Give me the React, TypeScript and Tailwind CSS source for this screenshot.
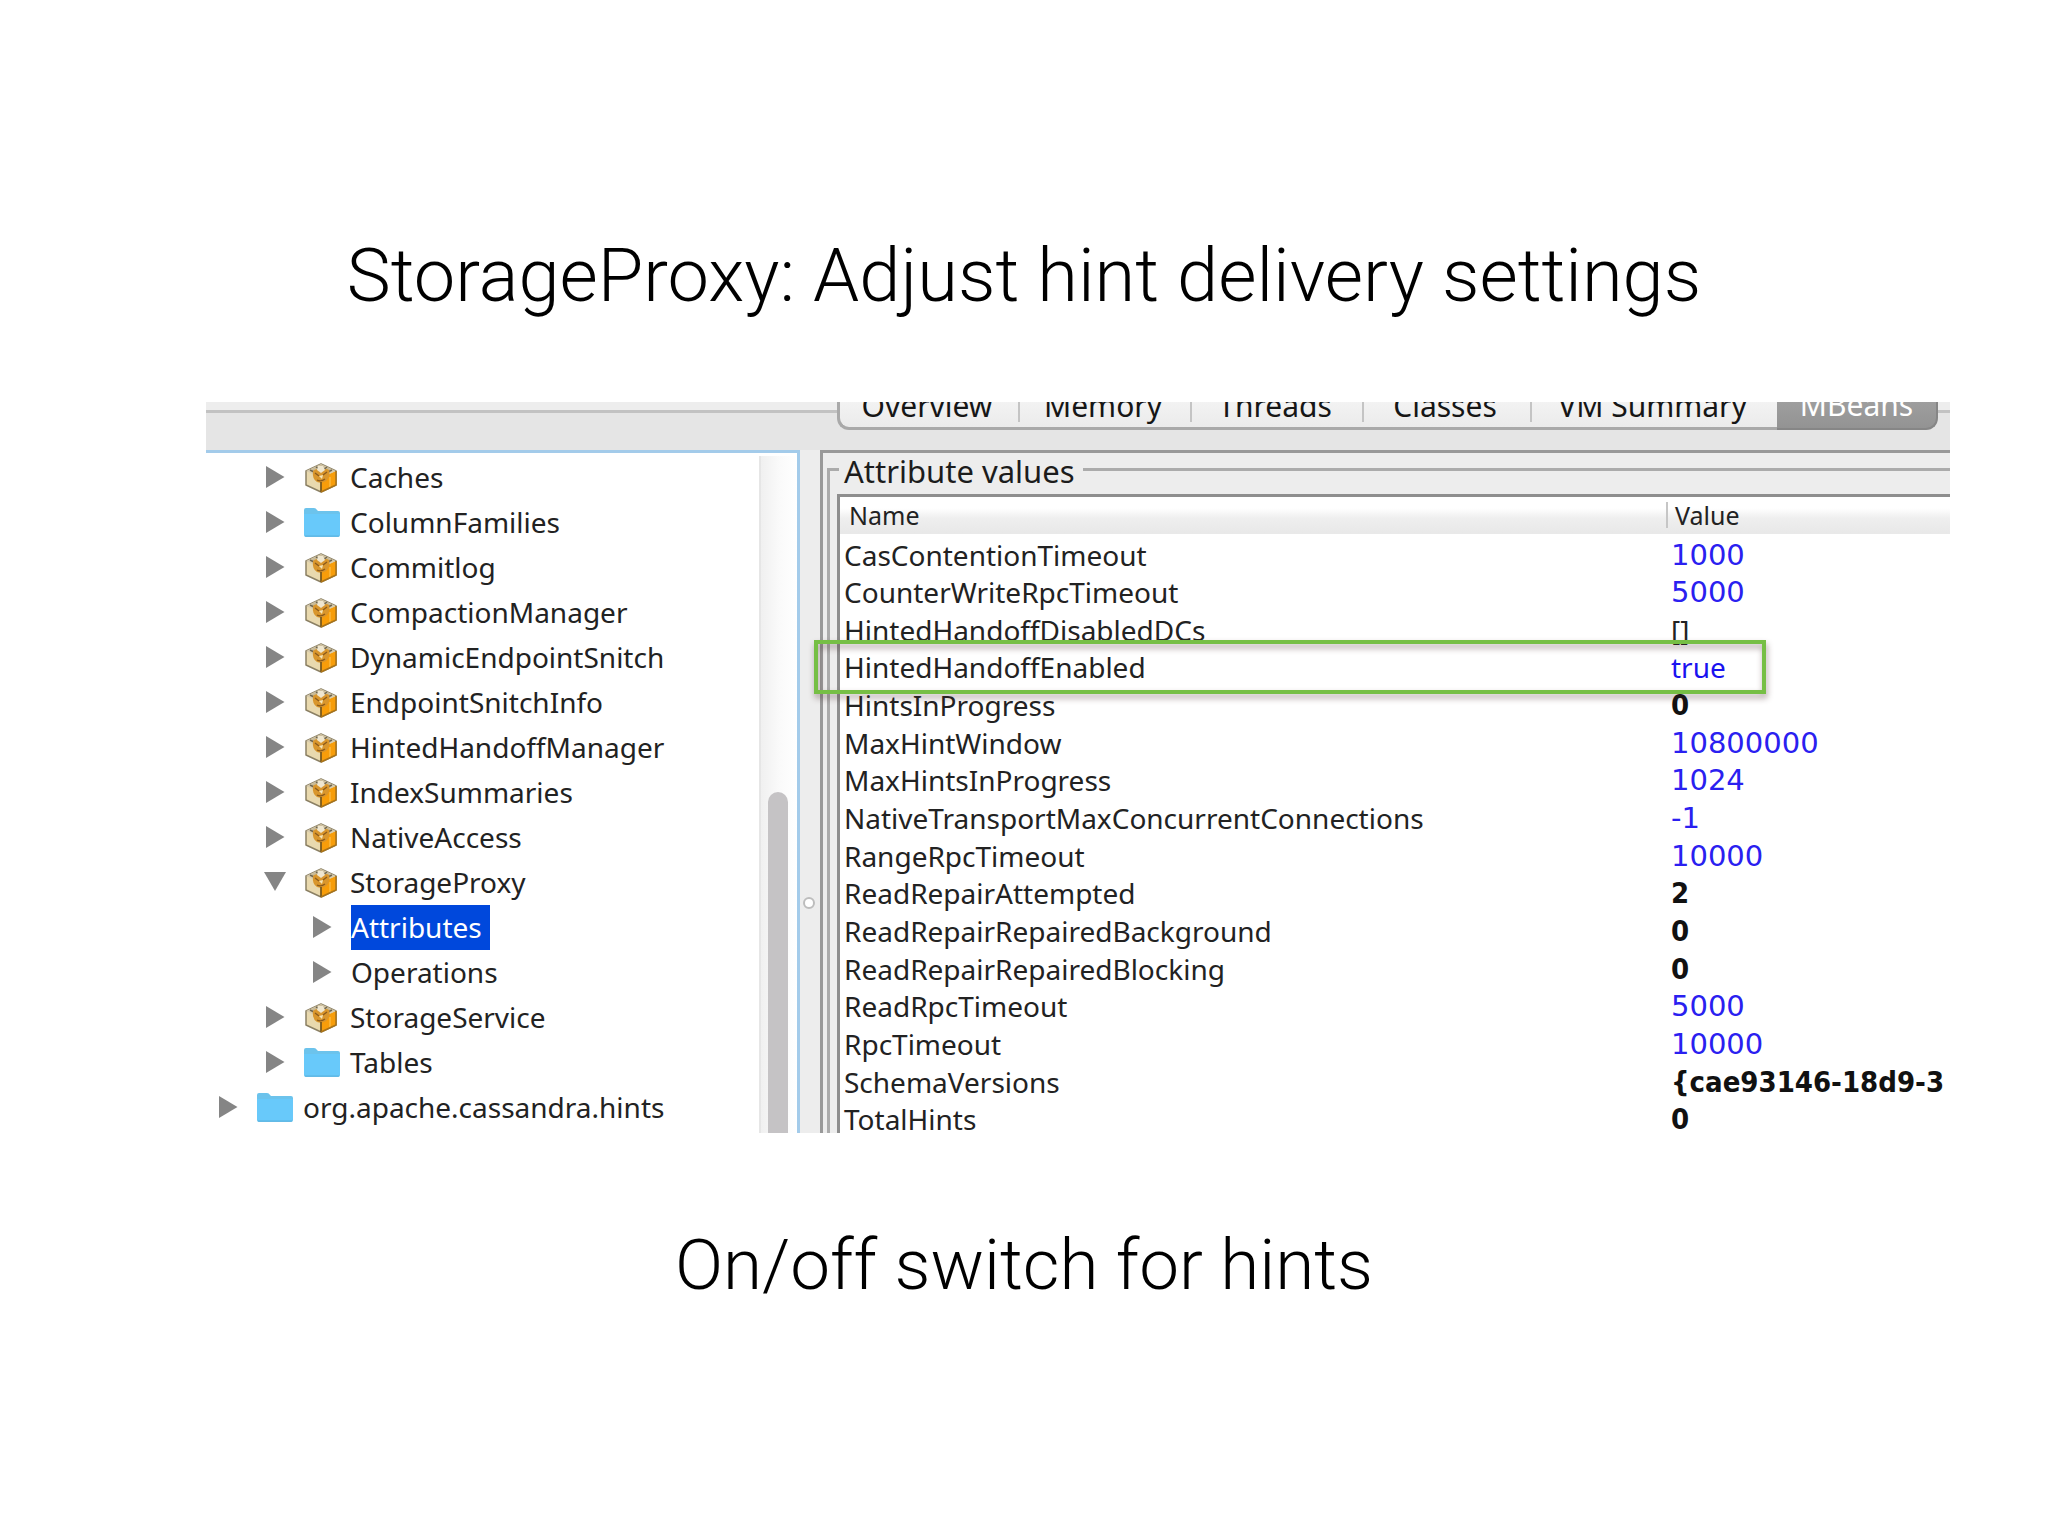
type NodeIcon = "bean" | "folder" | "none";

type TreeNode = {
  label: string;
  icon: NodeIcon;
  level: 0 | 1 | 2;
  open?: boolean;
  selected?: boolean;
};

const nodes: TreeNode[] = [
  { label: "Caches", icon: "bean", level: 1 },
  { label: "ColumnFamilies", icon: "folder", level: 1 },
  { label: "Commitlog", icon: "bean", level: 1 },
  { label: "CompactionManager", icon: "bean", level: 1 },
  { label: "DynamicEndpointSnitch", icon: "bean", level: 1 },
  { label: "EndpointSnitchInfo", icon: "bean", level: 1 },
  { label: "HintedHandoffManager", icon: "bean", level: 1 },
  { label: "IndexSummaries", icon: "bean", level: 1 },
  { label: "NativeAccess", icon: "bean", level: 1 },
  { label: "StorageProxy", icon: "bean", level: 1, open: true },
  { label: "Attributes", icon: "none", level: 2, selected: true },
  { label: "Operations", icon: "none", level: 2 },
  { label: "StorageService", icon: "bean", level: 1 },
  { label: "Tables", icon: "folder", level: 1 },
  { label: "org.apache.cassandra.hints", icon: "folder", level: 0 },
];

type Kind = "number" | "word" | "plain" | "bold";

const attributes: { name: string; value: string; kind: Kind; highlighted?: boolean }[] = [
  { name: "CasContentionTimeout", value: "1000", kind: "number" },
  { name: "CounterWriteRpcTimeout", value: "5000", kind: "number" },
  { name: "HintedHandoffDisabledDCs", value: "[]", kind: "plain" },
  { name: "HintedHandoffEnabled", value: "true", kind: "word", highlighted: true },
  { name: "HintsInProgress", value: "0", kind: "bold" },
  { name: "MaxHintWindow", value: "10800000", kind: "number" },
  { name: "MaxHintsInProgress", value: "1024", kind: "number" },
  { name: "NativeTransportMaxConcurrentConnections", value: "-1", kind: "number" },
  { name: "RangeRpcTimeout", value: "10000", kind: "number" },
  { name: "ReadRepairAttempted", value: "2", kind: "bold" },
  { name: "ReadRepairRepairedBackground", value: "0", kind: "bold" },
  { name: "ReadRepairRepairedBlocking", value: "0", kind: "bold" },
  { name: "ReadRpcTimeout", value: "5000", kind: "number" },
  { name: "RpcTimeout", value: "10000", kind: "number" },
  { name: "SchemaVersions", value: "{cae93146-18d9-3", kind: "bold" },
  { name: "TotalHints", value: "0", kind: "bold" },
];

const kindClass: Record<Kind, string> = {
  number: "font-['DejaVu_Sans',sans-serif] text-[29px] text-[#2a20f0]",
  word: "text-[28px] text-[#1a12f0]",
  plain: "text-[28px] text-[#222]",
  bold: "font-['DejaVu_Sans_Condensed','DejaVu_Sans',sans-serif] text-[29px] font-bold text-[#111]",
};

const levelClass = {
  0: "pl-[13px]",
  1: "pl-[60px]",
  2: "pl-[107px]",
};

const tabs = [
  { label: "Overview", width: "w-[180px]" },
  { label: "Memory", width: "w-[172px]" },
  { label: "Threads", width: "w-[172px]" },
  { label: "Classes", width: "w-[168px]" },
  { label: "VM Summary", width: "w-[245px]" },
];

function Arrow({ open }: { open?: boolean }) {
  return (
    <svg viewBox="0 0 20 24" className="mr-[18px] h-6 w-5 shrink-0 overflow-visible" fill="#858585" aria-hidden="true">
      {open ? <path d="M-2 1H20L9 20Z" /> : <path d="M0 0L18.500 11L0 22Z" />}
    </svg>
  );
}

function Bean() {
  return (
    <svg viewBox="0 0 36 30" className="mr-2.5 h-[30px] w-9 shrink-0" aria-hidden="true">
      <path d="M17 1L32 8V22L17 29L2 22V8Z" fill="#e9d9ae" stroke="#8b8064" strokeWidth="1.500" strokeLinejoin="round" />
      <path d="M17 14L32 8V22L17 29Z" fill="#f79d0a" />
      <path d="M17 1L32 8L17 15L2 8Z" fill="#d8ccae" />
      <path d="M9 5L17 2L25 5L28 8L17 14L6 8Z" fill="#c9bb98" />
      <path d="M12 4L16 6M23 4L19 7M6 7L10 9M28 7L24 9" stroke="#6f6650" strokeWidth="1.500" />
      <path d="M9 8Q8 16 13 19Q18 21 22 18Q27 14 25 7Q21 4 17 9Q13 4 9 8Z" fill="#d9962c" />
      <path d="M14 3L19 3L21 7L17 10L13 7Z" fill="#efe6cf" />
      <path d="M11 10L15 13M23 9L19 12M13 17Q17 19 21 16" stroke="#8a5a1c" strokeWidth="1.300" fill="none" />
      <path d="M15 13L19 12L18 16Z" fill="#f4e5b8" />
      <path d="M17 19V29" stroke="#7b5a1c" strokeWidth="1.800" />
      <path d="M26 14V24" stroke="#fbc04e" strokeWidth="1.200" />
      <path d="M32 8V22L17 29" fill="none" stroke="#a8731a" strokeWidth="1.500" />
    </svg>
  );
}

function Folder() {
  return (
    <svg viewBox="0 0 37 30" className="mr-[9px] h-[30px] w-[37px] shrink-0" aria-hidden="true">
      <path d="M0 2Q0 0 2 0H10Q12 0 13 2L14 3H34Q36 3 36 5V27Q36 29 34 29H2Q0 29 0 27Z" fill="#6cc3ec" />
      <path d="M0 6H36V26Q36 28 34 28H2Q0 28 0 26Z" fill="#68c9fa" />
      <path d="M1 28H35" stroke="#5bb2df" strokeWidth="1" />
    </svg>
  );
}

function TabBar() {
  return (
    <div className="flex h-12 items-start bg-[#e5e5e5]">
      <div className="h-[11px] w-[631px] shrink-0 border-b-3 border-[#c2c2c2] bg-[#ededed]" />
      <nav className="-mt-3 flex h-10 shrink-0 items-start text-[30px] leading-[30px] text-[#161616]">
        <div className="flex h-10 items-start rounded-bl-xl border-b-3 border-l-3 border-[#a9a9a9] bg-linear-to-b from-[#f6f6f6] to-[#ebebeb]">
          {tabs.map((tab) => (
            <button
              key={tab.label}
              type="button"
              className={`h-8 border-r-2 border-[#c4c4c4] pr-1 last:border-r-0 ${tab.width}`}
            >
              {tab.label}
            </button>
          ))}
        </div>
        <button
          type="button"
          aria-current="page"
          className="flex h-10 w-[161px] justify-center rounded-br-xl border-r-2 border-b-2 border-[#868686] bg-linear-to-b from-[#a3a3a3] to-[#939393] text-white"
        >
          MBeans
        </button>
      </nav>
      <div className="h-[11px] flex-1 border-b-3 border-[#c2c2c2] bg-[#ededed]" />
    </div>
  );
}

function Tree() {
  return (
    <section aria-label="MBean tree" className="flex w-[594px] shrink-0 border-t-3 border-r-3 border-[#a3cbea] bg-white">
      <ul className="flex-1 pt-0.5 pb-[3px] text-[28px] text-[#222]">
        {nodes.map((node) => (
          <li key={node.label}>
            <button type="button" className={`flex h-[45px] w-full items-center whitespace-nowrap ${levelClass[node.level]}`}>
              <Arrow open={node.open} />
              {node.icon === "bean" && <Bean />}
              {node.icon === "folder" && <Folder />}
              <span className={node.selected ? "bg-[#0048dc] pr-2 leading-[45px] text-white" : "leading-[45px]"}>
                {node.label}
              </span>
            </button>
          </li>
        ))}
      </ul>
      <div className="mt-[3px] flex w-[38px] flex-col border-l-2 border-[#e6e6e6] bg-linear-to-r from-[#f0f0f0] via-[#fafafa] to-white pt-[336px] pl-[7px]">
        <div className="w-5 flex-1 rounded-t-full bg-[#c5c3c5]" />
      </div>
    </section>
  );
}

function AttributePanel() {
  return (
    <section className="min-w-0 flex-1 border-t-3 border-l-3 border-[#999] bg-[#ededed] pl-1">
      <fieldset className="-mb-6 min-w-0 border-t-3 border-l-3 border-[#ababab] pl-[7px]">
        <legend className="ml-0.5 pt-1 pr-2 pl-[5px] text-[31px] leading-7 text-[#1c1c1c]">Attribute values</legend>
        <div className="mt-[9px] border-t-3 border-l-3 border-[#8e8e8e] bg-white">
          <table className="w-full table-fixed text-left whitespace-nowrap">
            <thead>
              <tr className="h-[38px] bg-linear-to-b from-white from-30% via-[#efefef] via-55% to-[#e9e9e9] to-90% text-[25px] leading-7 text-[#222]">
                <th scope="col" className="w-[826px] border-b-3 border-white p-0 pl-[9px] font-normal">
                  Name
                </th>
                <th scope="col" className="border-b-3 border-white p-0 font-normal">
                  <span className="block border-l-2 border-[#c6c6c6] pl-[7px] leading-[26px]">Value</span>
                </th>
              </tr>
            </thead>
            <tbody>
              {attributes.map((row) => (
                <tr key={row.name} className="h-[38px] nth-[3n]:h-[37px]">
                  <td className="relative p-0 pl-1 text-[28px] leading-9 text-[#222]">
                    {row.name}
                    {row.highlighted && (
                      <span className="absolute -top-2 -left-[26px] z-10 h-[54px] w-[952px] border-4 border-[#76bf45] drop-shadow-[1px_4px_3px_rgba(70,40,40,0.45)]" />
                    )}
                  </td>
                  <td className={`p-0 pl-[5px] leading-9 ${kindClass[row.kind]}`}>{row.value}</td>
                </tr>
              ))}
            </tbody>
          </table>
        </div>
      </fieldset>
    </section>
  );
}

export default function App() {
  return (
    <main className="min-h-screen bg-white pt-[231px] pb-20 font-['Noto_Sans',sans-serif] text-black">
      <h1 className="text-center font-['Roboto',sans-serif] text-[74px] leading-[90px] font-light">
        StorageProxy: Adjust hint delivery settings
      </h1>
      <figure className="mt-[81px] mr-[98px] ml-[206px] overflow-hidden">
        <TabBar />
        <div className="flex bg-[#ededed]">
          <Tree />
          <div role="separator" aria-orientation="vertical" className="w-5 shrink-0 pt-[447px] pl-[3px]">
            <div className="size-3 rounded-full border-2 border-[#bdbdbd] bg-white" />
          </div>
          <AttributePanel />
        </div>
      </figure>
      <p className="mt-[87px] text-center font-['Roboto',sans-serif] text-[71px] leading-[90px] font-light">
        On/off switch for hints
      </p>
    </main>
  );
}
